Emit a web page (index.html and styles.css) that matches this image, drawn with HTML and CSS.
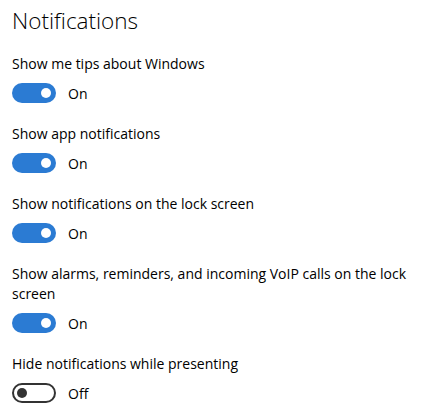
FILE: index.html
```html
<!DOCTYPE html>
<html>
<head>
    <title>Notifications</title>
    <link rel="stylesheet" href="styles.css">
</head>
<body>
    <div class="page">
        <h1 class="title">Notifications</h1>

        <div class="setting">
            <div class="label-text">Show me tips about Windows</div>
            <div class="toggle-row">
                <span class="toggle on"><span class="knob"></span></span>
                <span class="state">On</span>
            </div>
        </div>

        <div class="setting">
            <div class="label-text">Show app notifications</div>
            <div class="toggle-row">
                <span class="toggle on"><span class="knob"></span></span>
                <span class="state">On</span>
            </div>
        </div>

        <div class="setting">
            <div class="label-text">Show notifications on the lock screen</div>
            <div class="toggle-row">
                <span class="toggle on"><span class="knob"></span></span>
                <span class="state">On</span>
            </div>
        </div>

        <div class="setting">
            <div class="label-text">Show alarms, reminders, and incoming VoIP calls on the lock screen</div>
            <div class="toggle-row">
                <span class="toggle on"><span class="knob"></span></span>
                <span class="state">On</span>
            </div>
        </div>

        <div class="setting">
            <div class="label-text">Hide notifications while presenting</div>
            <div class="toggle-row">
                <span class="toggle off"><span class="knob"></span></span>
                <span class="state">Off</span>
            </div>
        </div>
    </div>
</body>
</html>
```

FILE: styles.css
```css
body {
    margin: 0;
    background-color: #fff;
    color: #000;
    font-family: "Open Sans", "Noto Sans", sans-serif;
}
.page {
    width: 415px;
    padding: 6px 0 0 12px;
}
.title {
    margin: 0 0 18px 0;
    font-size: 22.5px;
    font-weight: 300;
    line-height: 30px;
}
.setting {
    margin-bottom: 21px;
}
.label-text {
    font-size: 14px;
    line-height: 20px;
}
.toggle-row {
    display: flex;
    align-items: center;
    margin-top: 9px;
    height: 20px;
}
.toggle {
    position: relative;
    box-sizing: border-box;
    width: 44px;
    height: 20px;
    border-radius: 10px;
}
.toggle.on {
    background-color: #2b7bd3;
}
.toggle.off {
    border: 2px solid #333;
}
.knob {
    position: absolute;
    top: 5px;
    right: 5px;
    width: 10px;
    height: 10px;
    border-radius: 50%;
    background-color: #fff;
}
.toggle.off .knob {
    top: 3px;
    left: 3px;
    right: auto;
    background-color: #333;
}
.state {
    margin-left: 12px;
    font-size: 14px;
}
```
